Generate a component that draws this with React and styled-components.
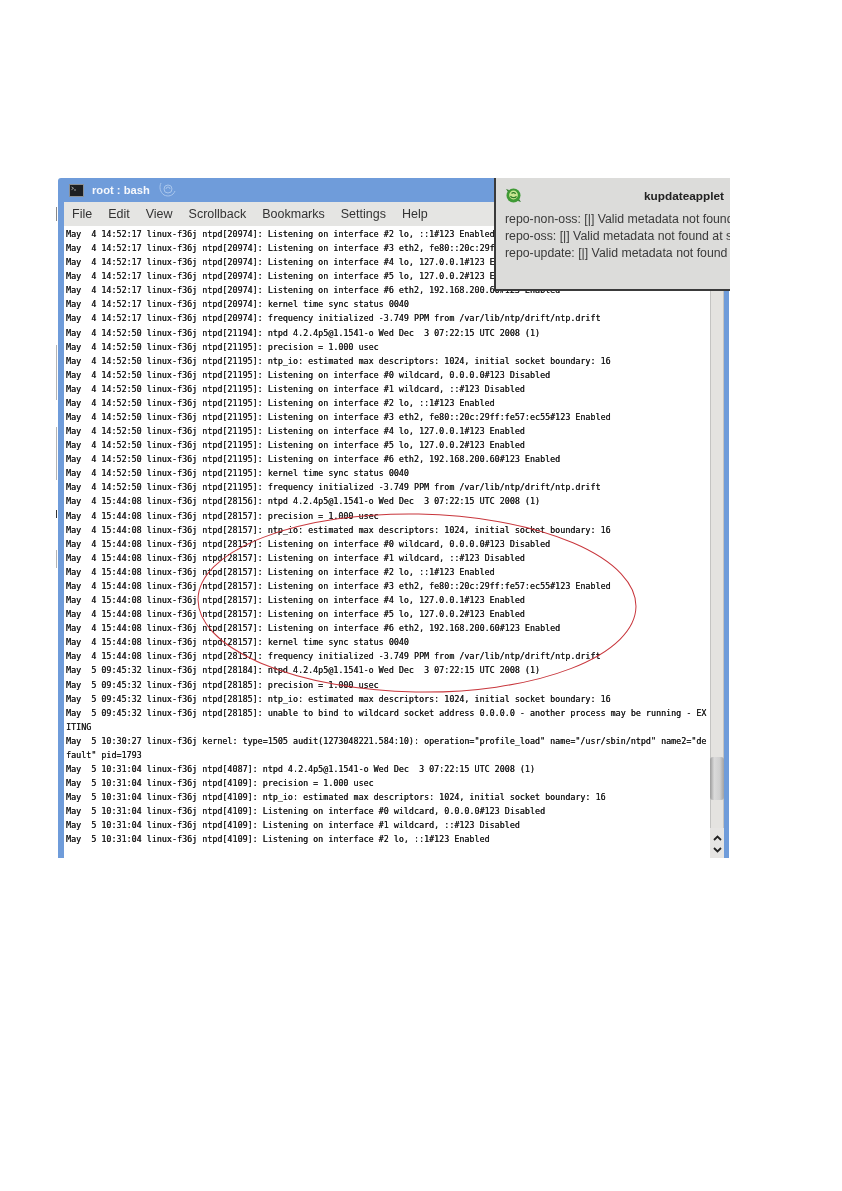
import React from 'react';
import styled, { createGlobalStyle } from 'styled-components';

const GlobalStyle = createGlobalStyle`
  html, body {
    margin: 0;
    padding: 0;
    background: #fff;
  }
`;

const Page = styled.div`
  width: 842px;
  height: 1191px;
  padding: 178px 0 0 56px;
  box-sizing: border-box;
  overflow: hidden;
  display: flex;
  align-items: flex-start;
`;

/* bits of the desktop that show to the left of the window */
const DesktopEdge = styled.div`
  width: 2px;
  flex: none;
  display: flex;
  flex-direction: column;
  filter: blur(0.4px);
`;

const Sliver = styled.div`
  height: ${props => props.h}px;
  margin-top: ${props => props.gap}px;
  border-left: 1px solid ${props => props.color || '#b4b4b4'};
`;

const Window = styled.div`
  position: relative;
  width: 672px;
  height: 680px;
  flex: none;
  display: flex;
  flex-direction: column;
  overflow: hidden;
  background: #fff;
  border-top-left-radius: 3px;
  filter: blur(0.35px);
`;

const TitleBar = styled.div`
  height: 24px;
  flex: none;
  display: flex;
  align-items: center;
  padding: 0 0 0 11px;
  gap: 8px;
  background: #6f9cda;
`;

const TitleText = styled.span`
  font: bold 11.2px "Liberation Sans", sans-serif;
  color: #f6f8fc;
`;

const MenuBar = styled.div`
  height: 24px;
  flex: none;
  display: flex;
  align-items: center;
  padding: 0 0 0 8px;
  gap: 16px;
  background: #e5e5e3;
  border-left: 6px solid #6f9cda;
`;

const MenuItem = styled.span`
  font: 12.5px "Liberation Sans", sans-serif;
  color: #333;
`;

const Body = styled.div`
  flex: 1;
  min-height: 0;
  margin-right: 1px;
  display: flex;
  border-left: 6px solid #6f9cda;
`;

const Terminal = styled.div`
  flex: 1;
  min-width: 0;
  padding: 1px 0 0 2px;
  background: #fff;
  overflow: hidden;
`;

const Line = styled.div`
  height: 14.09px;
  line-height: 14.09px;
  white-space: pre;
  font-family: "DejaVu Sans Mono", monospace;
  font-size: 8.4px;
  font-weight: 500;
  color: #1c1c1c;
  text-shadow: 0.2px 0 0 #1c1c1c;
`;

const Scrollbar = styled.div`
  width: 19px;
  flex: none;
  box-sizing: border-box;
  border-right: 5px solid #6f9cda;
  display: flex;
  flex-direction: column;
  background: #e4e3e0;
`;

const Track = styled.div`
  flex: 1;
  padding-top: 531px;
  box-sizing: border-box;
  border-left: 1px solid #c4c4c2;
  border-right: 1px solid #c4c4c2;
  background: #e4e3e0;
`;

const Thumb = styled.div`
  height: 43px;
  margin: 0 -1px;
  border-radius: 3px;
  background: linear-gradient(90deg, #9c9c9c, #dadada 30%, #cfcfcf 70%, #a2a2a2);
`;

const Arrows = styled.div`
  height: 30px;
  flex: none;
  background: #e6e5e3;
  display: flex;
  flex-direction: column;
  align-items: center;
  padding-top: 7px;
  box-sizing: border-box;
  gap: 6px;
`;

const Popup = styled.div`
  position: absolute;
  top: 0;
  left: 436px;
  width: 300px;
  height: 113px;
  box-sizing: border-box;
  background: #dcdcda;
  border-left: 2px solid #3a3a3a;
  border-bottom: 2px solid #3a3a3a;
  padding: 8px 0 0 9px;
`;

const PopupHead = styled.div`
  height: 19px;
  display: flex;
  align-items: center;
`;

const PopupTitle = styled.span`
  margin-left: 122px;
  font: bold 11.8px "Liberation Sans", sans-serif;
  color: #222;
`;

const PopupText = styled.div`
  margin-top: 6px;
`;

const PopupLine = styled.div`
  height: 17px;
  white-space: pre;
  font: 12.3px/17px "Liberation Sans", sans-serif;
  color: #3a3a3a;
`;

const Ring = styled.svg`
  position: absolute;
  left: 0;
  top: 0;
  pointer-events: none;
  overflow: visible;
`;

const PREFIX_14A = 'May  4 14:52:17 linux-f36j ntpd[20974]: ';
const PREFIX_14B = 'May  4 14:52:50 linux-f36j ntpd[21195]: ';
const PREFIX_15 = 'May  4 15:44:08 linux-f36j ntpd[28157]: ';
const PREFIX_09 = 'May  5 09:45:32 linux-f36j ntpd[28185]: ';
const PREFIX_10 = 'May  5 10:31:04 linux-f36j ntpd[4109]: ';

const NTPD = 'ntpd 4.2.4p5@1.1541-o Wed Dec  3 07:22:15 UTC 2008 (1)';
const PRECISION = 'precision = 1.000 usec';
const NTP_IO = 'ntp_io: estimated max descriptors: 1024, initial socket boundary: 16';
const IF0 = 'Listening on interface #0 wildcard, 0.0.0.0#123 Disabled';
const IF1 = 'Listening on interface #1 wildcard, ::#123 Disabled';
const IF2 = 'Listening on interface #2 lo, ::1#123 Enabled';
const IF3 = 'Listening on interface #3 eth2, fe80::20c:29ff:fe57:ec55#123 Enabled';
const IF4 = 'Listening on interface #4 lo, 127.0.0.1#123 Enabled';
const IF5 = 'Listening on interface #5 lo, 127.0.0.2#123 Enabled';
const IF6 = 'Listening on interface #6 eth2, 192.168.200.60#123 Enabled';
const SYNC = 'kernel time sync status 0040';
const FREQ = 'frequency initialized -3.749 PPM from /var/lib/ntp/drift/ntp.drift';

const startup = [PRECISION, NTP_IO, IF0, IF1, IF2, IF3, IF4, IF5, IF6, SYNC, FREQ];

const lines = [
  ...[IF2, IF3, IF4, IF5, IF6, SYNC, FREQ].map(t => PREFIX_14A + t),
  'May  4 14:52:50 linux-f36j ntpd[21194]: ' + NTPD,
  ...startup.map(t => PREFIX_14B + t),
  'May  4 15:44:08 linux-f36j ntpd[28156]: ' + NTPD,
  ...startup.map(t => PREFIX_15 + t),
  'May  5 09:45:32 linux-f36j ntpd[28184]: ' + NTPD,
  PREFIX_09 + PRECISION,
  PREFIX_09 + NTP_IO,
  PREFIX_09 + 'unable to bind to wildcard socket address 0.0.0.0 - another process may be running - EX',
  'ITING',
  'May  5 10:30:27 linux-f36j kernel: type=1505 audit(1273048221.584:10): operation="profile_load" name="/usr/sbin/ntpd" name2="de',
  'fault" pid=1793',
  'May  5 10:31:04 linux-f36j ntpd[4087]: ' + NTPD,
  ...[PRECISION, NTP_IO, IF0, IF1, IF2].map(t => PREFIX_10 + t),
];

const menu = ['File', 'Edit', 'View', 'Scrollback', 'Bookmarks', 'Settings', 'Help'];

const notices = [
  'repo-non-oss: [|] Valid metadata not found at specified URL',
  'repo-oss: [|] Valid metadata not found at specified URL',
  'repo-update: [|] Valid metadata not found at specified URL',
];

const slivers = [
  { gap: 29, h: 14, color: '#888' },
  { gap: 124, h: 55 },
  { gap: 27, h: 53 },
  { gap: 30, h: 8, color: '#333' },
  { gap: 32, h: 18 },
];

const TerminalIcon = () => (
  <svg width="15" height="13" viewBox="0 0 15 13">
    <rect width="15" height="13" fill="#8a8f94" />
    <rect x="1" y="1" width="13" height="11" fill="#1d1f22" />
    <path d="M2.500 3l2 1.300-2 1.300M5 6h2" stroke="#d8d8d8" strokeWidth="0.7" fill="none" />
  </svg>
);

const Chameleon = () => (
  <svg width="18" height="16" viewBox="0 0 18 16" fill="none" stroke="#a9c6ec" strokeWidth="1">
    <path d="M3 1c-2 4-1 9 3 12 4 2 9 1 11-4" />
    <circle cx="10" cy="7" r="4" />
    <path d="M8 7a2 2 0 0 1 4 0" />
  </svg>
);

const GeekoBadge = () => (
  <svg width="17" height="17" viewBox="0 0 17 17">
    <circle cx="8.500" cy="8.500" r="7" fill="#3f9a35" />
    <circle cx="8.500" cy="8" r="4.400" fill="#c8e58f" />
    <path d="M5.500 9c1 2 4.500 2.400 6 .4M6.500 6.500c1.500-1.500 3.500-1 4 .5" stroke="#2f7d2a" strokeWidth="1.300" fill="none" />
    <path d="M1 2l3 1-1 2zM16 15l-3-1 1-2z" fill="#2f7d2a" />
  </svg>
);

const Chevron = ({ up }) => (
  <svg width="9" height="6" viewBox="0 0 9 6" fill="none" stroke="#222" strokeWidth="1.800">
    <path d={up ? 'M1 5l3.500-3.500L8 5' : 'M1 1l3.500 3.500L8 1'} />
  </svg>
);

const App = () => (
  <>
    <GlobalStyle />
    <Page>
      <DesktopEdge>
        {slivers.map((s, i) => <Sliver key={i} gap={s.gap} h={s.h} color={s.color} />)}
      </DesktopEdge>
      <Window>
        <TitleBar>
          <TerminalIcon />
          <TitleText>root : bash</TitleText>
          <Chameleon />
        </TitleBar>
        <MenuBar>
          {menu.map(item => <MenuItem key={item}>{item}</MenuItem>)}
        </MenuBar>
        <Body>
          <Terminal>
            {lines.map((line, i) => <Line key={i}>{line}</Line>)}
          </Terminal>
          <Scrollbar>
            <Track>
              <Thumb />
            </Track>
            <Arrows>
              <Chevron up />
              <Chevron />
            </Arrows>
          </Scrollbar>
        </Body>
        <Popup>
          <PopupHead>
            <GeekoBadge />
            <PopupTitle>kupdateapplet</PopupTitle>
          </PopupHead>
          <PopupText>
            {notices.map(n => <PopupLine key={n}>{n}</PopupLine>)}
          </PopupText>
        </Popup>
        <Ring width="672" height="680">
          <ellipse cx="359" cy="425" rx="219" ry="89" fill="none" stroke="#c8363c" strokeWidth="1" transform="rotate(1 359 425)" />
        </Ring>
      </Window>
    </Page>
  </>
);

export default App;
